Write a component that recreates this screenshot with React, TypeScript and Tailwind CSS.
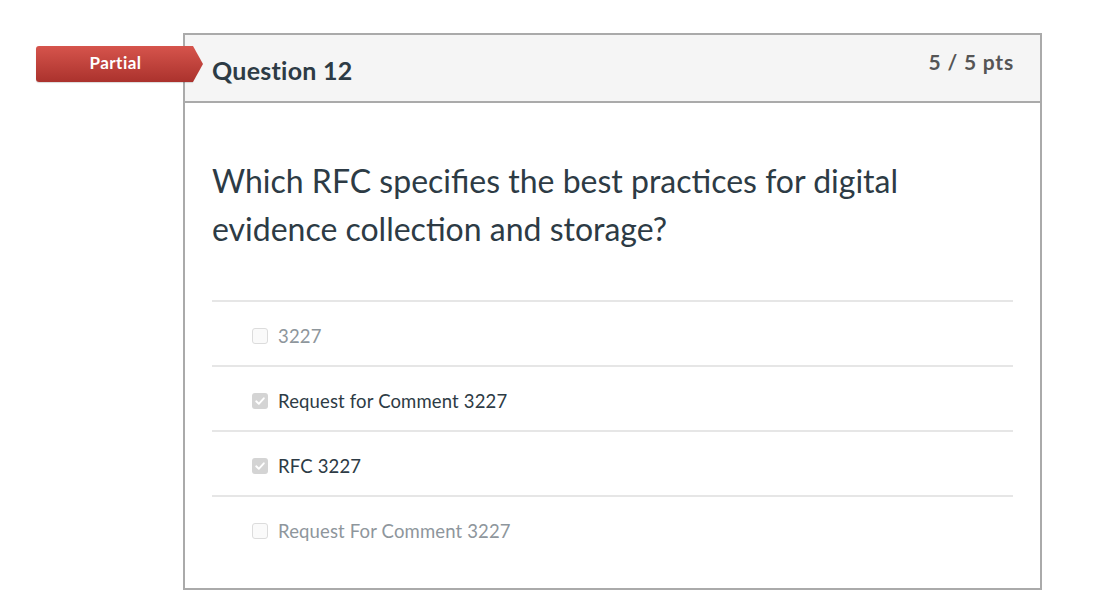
import React from "react";

const answers = [
  { text: "3227", checked: false },
  { text: "Request for Comment 3227", checked: true },
  { text: "RFC 3227", checked: true },
  { text: "Request For Comment 3227", checked: false },
];

function Box({ checked }: { checked: boolean }) {
  if (checked) {
    return (
      <span className="flex h-[16px] w-[16px] shrink-0 items-center justify-center rounded-[3px] bg-[#d4d4d4]">
        <svg width="12" height="12" viewBox="0 0 12 12" fill="none">
          <path d="M2.2 6.3 L4.8 8.8 L9.8 3.3" stroke="#ffffff" strokeWidth="1.9" strokeLinecap="round" strokeLinejoin="round" />
        </svg>
      </span>
    );
  }
  return <span className="h-[16px] w-[16px] shrink-0 rounded-[3px] border border-[#dcdcdc] bg-[#fafafa]" />;
}

export default function App() {
  return (
    <div className="relative min-h-[608px] w-[1102px] bg-white pl-[183px] pt-[33px]" style={{ fontFamily: "Lato, 'Open Sans', sans-serif" }}>
      <div className="absolute left-[36px] top-[46px] flex h-[36px] z-10">
        <div className="flex w-[157px] items-center justify-center rounded-l-[3px] bg-gradient-to-b from-[#d6544c] to-[#ab322d] text-[17px] font-bold tracking-[0.5px] text-white shadow-[0_1px_1px_rgba(0,0,0,0.15)]">
          <span className="-mt-[2px] pl-[2px]">Partial</span>
        </div>
        <div className="h-[36px] w-[10px] bg-gradient-to-b from-[#d6544c] to-[#ab322d] [clip-path:polygon(0_0,100%_50%,0_100%)]" />
      </div>
      <div className="h-[557px] w-[859px] border-2 border-[#aaaaaa]">
        <div className="flex h-[68px] items-start justify-between border-b-2 border-[#aaaaaa] bg-[#f5f5f5] pl-[27px] pr-[26px]">
          <div className="mt-[20px] text-[25px] font-bold leading-[30px] tracking-[0.25px] text-[#2d3b45]">Question 12</div>
          <div className="mt-[14px] text-[21px] font-bold leading-[26px] tracking-[0.8px] text-[#555555]">5 / 5 pts</div>
        </div>
        <div className="px-[27px] pt-[54px]">
          <div className="max-w-[740px] text-[32px] leading-[48px] text-[#2d3b45]">
            Which RFC specifies the best practices for digital evidence collection and storage?
          </div>
          <div className="mt-[47px]">
            {answers.map((a, i) => (
              <div key={i} className="flex h-[65px] items-center gap-[10px] border-t-2 border-[#e6e6e6] pl-[40px] pt-[4px]">
                <Box checked={a.checked} />
                <span className={`text-[18.5px] leading-[24px] tracking-[0.15px] ${a.checked ? "text-[#2d3b45]" : "text-[#8e969c]"}`}>{a.text}</span>
              </div>
            ))}
          </div>
        </div>
      </div>
    </div>
  );
}
